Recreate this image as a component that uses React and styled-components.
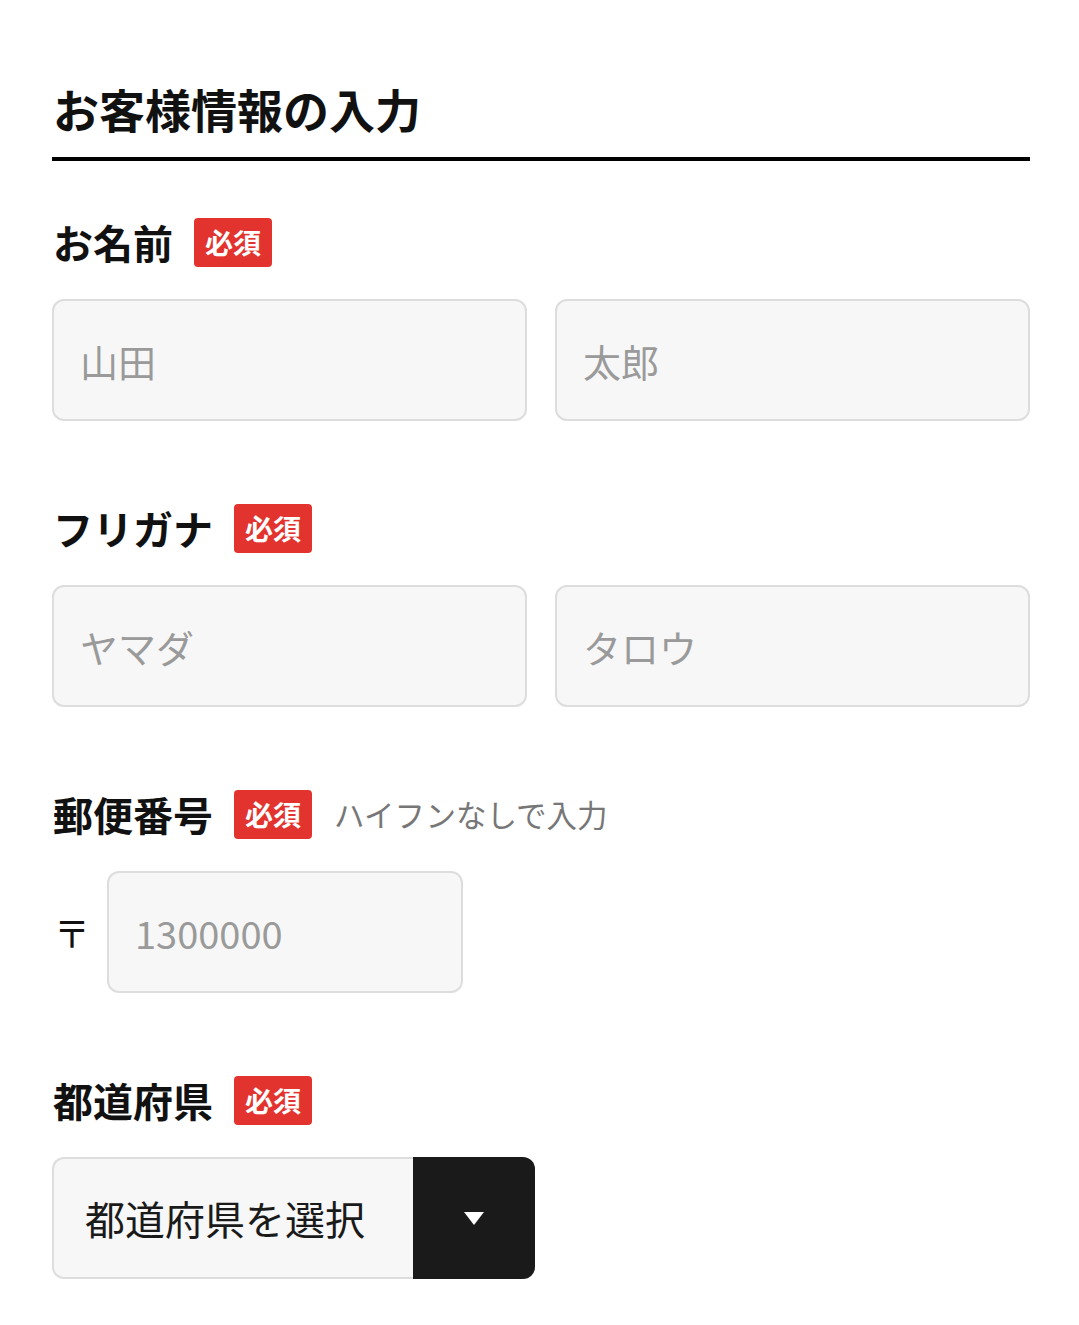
import React from "react";
import styled, { createGlobalStyle } from "styled-components";

const GlobalStyle = createGlobalStyle`
  html, body { margin: 0; padding: 0; background: #ffffff; }
  body { font-family: "Noto Sans CJK JP", "Noto Sans", sans-serif; color: #111; }
  * { box-sizing: border-box; }
`;

const Page = styled.div`
  padding: 77px 49px 47px 52px;
`;

const Title = styled.h1`
  margin: 0;
  font-size: 46px;
  line-height: 63px;
  font-weight: 700;
  color: #111;
  padding-bottom: 17px;
  border-bottom: 4px solid #000;
  padding-left: 1px;
`;

const Section = styled.section`
  margin-top: ${(p) => p.$top}px;
  display: flex;
  flex-direction: column;
  gap: 32px;
`;

const LabelRow = styled.div`
  display: flex;
  align-items: center;
  height: 49px;
`;

const Label = styled.span`
  font-size: 40px;
  font-weight: 700;
  line-height: 49px;
  color: #111;
  padding-left: 1px;
`;

const Badge = styled.span`
  margin-left: 21px;
  height: 49px;
  padding: 0 11px;
  background: #e2332e;
  color: #fff;
  font-size: 28px;
  font-weight: 700;
  line-height: 49px;
  border-radius: 4px;
`;

const Hint = styled.span`
  margin-left: 22px;
  font-size: 30.5px;
  color: #777;
  line-height: 49px;
`;

const TwoCols = styled.div`
  display: grid;
  grid-template-columns: 1fr 1fr;
  gap: 28px;
`;

const TextInput = styled.input`
  display: block;
  width: ${(p) => (p.$width ? `${p.$width}px` : "100%")};
  height: 122px;
  border: 2px solid #dddddd;
  border-radius: 12px;
  background: #f7f7f7;
  padding: 0 26px;
  font-family: "Noto Sans CJK JP", "Noto Sans", sans-serif;
  font-size: 38px;
  color: #222;
  outline: none;
  &::placeholder { color: #9a9a9a; }
`;

const PostalRow = styled.div`
  display: flex;
  align-items: center;
`;

const PostalMark = styled.span`
  font-size: 36px;
  line-height: 1;
  width: 55px;
  padding-left: 2px;
  color: #111;
`;

const SelectWrap = styled.div`
  display: flex;
  width: 483px;
  height: 122px;
`;

const SelectBox = styled.select`
  appearance: none;
  -webkit-appearance: none;
  flex: 1;
  height: 100%;
  border: 2px solid #dddddd;
  border-right: none;
  border-radius: 12px 0 0 12px;
  background: #f7f7f7;
  padding: 0 0 0 31px;
  font-family: "Noto Sans CJK JP", "Noto Sans", sans-serif;
  font-size: 40px;
  color: #1a1a1a;
  outline: none;
`;

const Caret = styled.div`
  width: 122px;
  height: 100%;
  background: #1a1a1a;
  border-radius: 0 12px 12px 0;
  display: flex;
  align-items: center;
  justify-content: center;
`;

export default function App() {
  return (
    <>
      <GlobalStyle />
      <Page>
        <Title>お客様情報の入力</Title>

        <Section $top={57}>
          <LabelRow>
            <Label>お名前</Label>
            <Badge>必須</Badge>
          </LabelRow>
          <TwoCols>
            <TextInput placeholder="山田" />
            <TextInput placeholder="太郎" />
          </TwoCols>
        </Section>

        <Section $top={83}>
          <LabelRow>
            <Label>フリガナ</Label>
            <Badge>必須</Badge>
          </LabelRow>
          <TwoCols>
            <TextInput placeholder="ヤマダ" />
            <TextInput placeholder="タロウ" />
          </TwoCols>
        </Section>

        <Section $top={83}>
          <LabelRow>
            <Label>郵便番号</Label>
            <Badge>必須</Badge>
            <Hint>ハイフンなしで入力</Hint>
          </LabelRow>
          <PostalRow>
            <PostalMark>〒</PostalMark>
            <TextInput $width={356} placeholder="1300000" />
          </PostalRow>
        </Section>

        <Section $top={83}>
          <LabelRow>
            <Label>都道府県</Label>
            <Badge>必須</Badge>
          </LabelRow>
          <SelectWrap>
            <SelectBox defaultValue="">
              <option value="">都道府県を選択</option>
            </SelectBox>
            <Caret>
              <svg width="20" height="13" viewBox="0 0 20 13">
                <path d="M0 0 H20 L10 13 Z" fill="#fff" />
              </svg>
            </Caret>
          </SelectWrap>
        </Section>
      </Page>
    </>
  );
}
